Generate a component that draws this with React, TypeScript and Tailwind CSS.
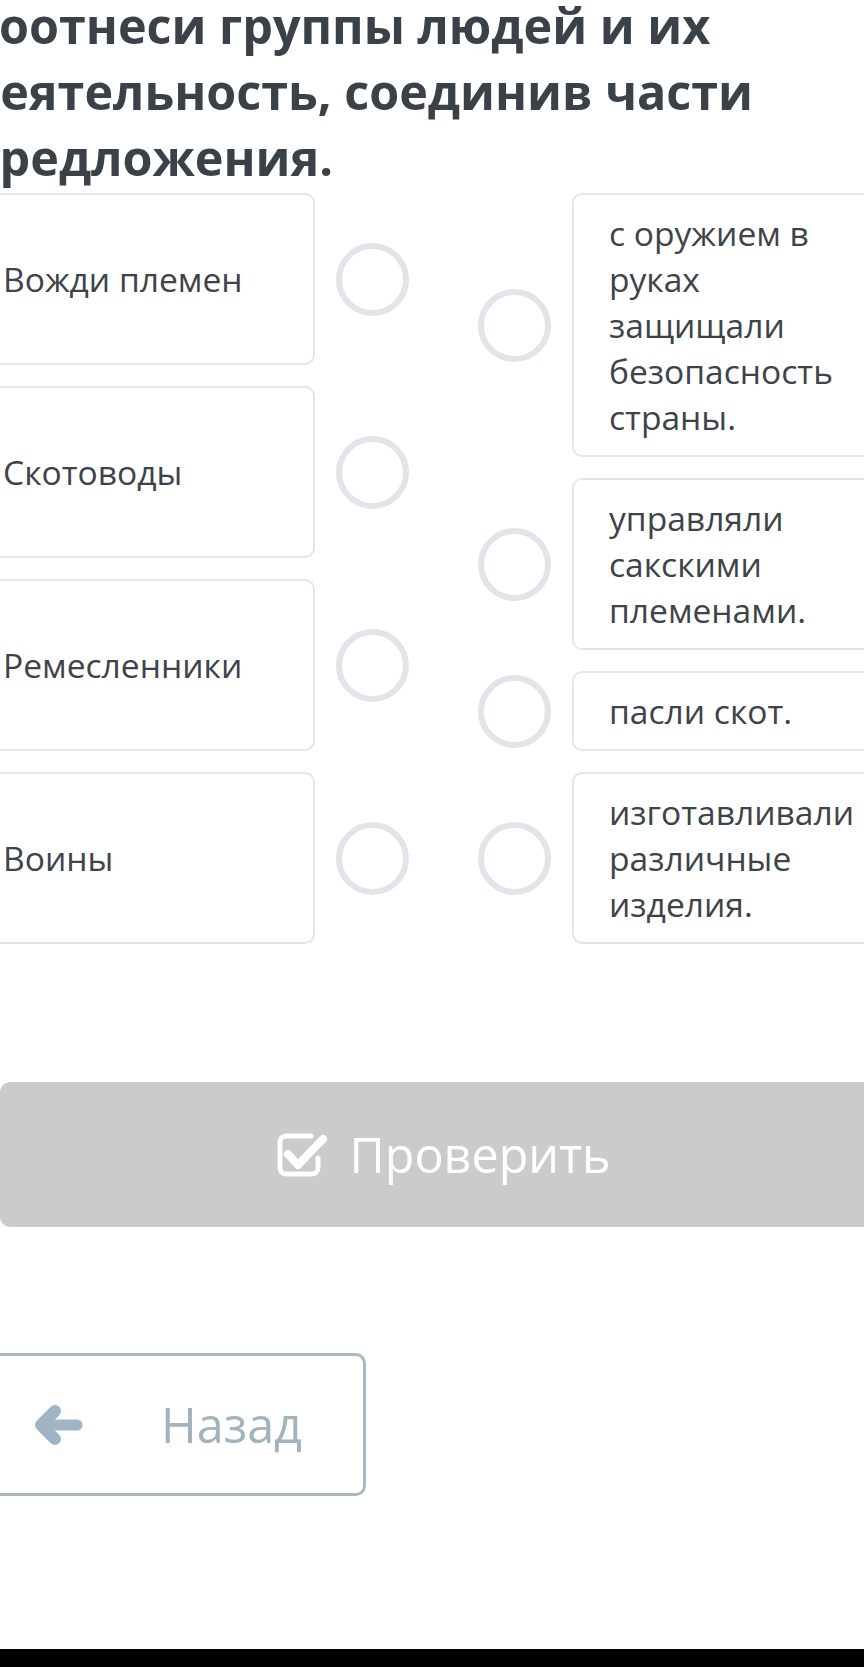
const left = ["Вожди племен", "Скотоводы", "Ремесленники", "Воины"];

const right = [
  "с оружием в руках защищали безопасность страны.",
  "управляли сакскими племенами.",
  "пасли скот.",
  "изготавливали различные изделия.",
];

const Ring = () => (
  <div className="w-[73px] h-[73px] shrink-0 rounded-full border-[6px] border-[#e1e5e9]" />
);

const CheckIcon = () => (
  <svg width="54" height="46" viewBox="0 0 54 46" fill="none">
    <path
      d="M34 4 H9 a6 6 0 0 0 -6 6 v26 a6 6 0 0 0 6 6 h26 a6 6 0 0 0 6 -6 v-10"
      stroke="white"
      strokeWidth="5"
      strokeLinecap="round"
    />
    <path
      d="M11 22 L21 33 L46 7"
      stroke="white"
      strokeWidth="8"
      strokeLinecap="round"
      strokeLinejoin="round"
    />
  </svg>
);

const ArrowIcon = () => (
  <svg width="50" height="42" viewBox="0 0 50 42" fill="none">
    <path d="M20 21 H44" stroke="#9fb4c5" strokeWidth="11" strokeLinecap="round" />
    <path
      d="M22 7 L8 21 L22 35"
      stroke="#9fb4c5"
      strokeWidth="12"
      strokeLinecap="round"
      strokeLinejoin="round"
    />
  </svg>
);

export default function App() {
  return (
    <div className="w-full overflow-hidden bg-white font-['Open_Sans',sans-serif]">
      <div className="ml-[-34px] w-[956px]">
        <h1 className="mt-[-8px] pl-[2px] text-[48.5px] leading-[66px] font-bold text-[#3a4149] whitespace-nowrap">
          Соотнеси группы людей и их
          <br />
          деятельность, соединив части
          <br />
          предложения.
        </h1>

        <div className="mt-[3px] flex gap-[69px]">
          <div className="flex flex-col gap-[21px]">
            {left.map((t) => (
              <div key={t} className="flex items-center gap-[21px]">
                <div className="w-[349px] h-[172px] flex items-center pl-[35px] border-2 border-[#e3e6e9] rounded-[10px] text-[33.6px] leading-[46px] text-[#3d4348]">
                  {t}
                </div>
                <Ring />
              </div>
            ))}
          </div>
          <div className="flex flex-col gap-[21px]">
            {right.map((t) => (
              <div key={t} className="flex items-center gap-[21px]">
                <Ring />
                <div className="w-[349px] py-[15px] pl-[35px] pr-[35px] border-2 border-[#e3e6e9] rounded-[10px] text-[33.6px] leading-[46px] text-[#3d4348]">
                  {t}
                </div>
              </div>
            ))}
          </div>
        </div>

        <button className="mt-[138px] ml-[34px] w-[888px] h-[145px] flex items-center justify-center gap-[18px] rounded-[10px] bg-[#cbcbcb] text-white text-[48.5px]">
          <CheckIcon />
          <span>Проверить</span>
        </button>

        <button className="mt-[126px] w-[400px] h-[143px] flex items-center border-[3px] border-[#a9b9c1] rounded-[10px] text-[#a2b3bd] text-[48.5px]">
          <span className="ml-[64px] flex">
            <ArrowIcon />
          </span>
          <span className="ml-[78px]">Назад</span>
        </button>
      </div>
      <div className="mt-[153px] h-[18px] bg-black" />
    </div>
  );
}
